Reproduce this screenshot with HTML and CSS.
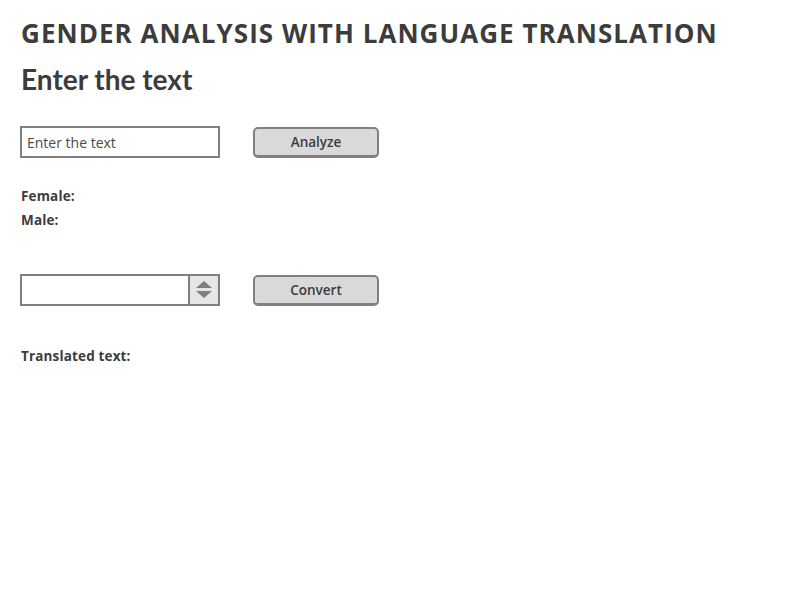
FILE: index.html
```html
<!DOCTYPE html>
<html>
<head>
<meta charset="utf-8">
<link rel="stylesheet" href="styles.css">
</head>
<body>
<main class="page">
  <h1 class="title">GENDER ANALYSIS WITH LANGUAGE TRANSLATION</h1>
  <h2 class="subtitle">Enter the text</h2>
  <div class="row row-input">
    <input class="text-input" type="text" placeholder="Enter the text">
    <button class="btn">Analyze</button>
  </div>
  <div class="results">
    <div class="label">Female:</div>
    <div class="label">Male:</div>
  </div>
  <div class="row row-select">
    <div class="select">
      <div class="select-value"></div>
      <div class="select-spin">
        <svg width="16" height="20" viewBox="0 0 16 20"><polygon points="8,1 16,8 0,8" fill="#7f7f7f"/><polygon points="0,11 16,11 8,18" fill="#7f7f7f"/></svg>
      </div>
    </div>
    <button class="btn">Convert</button>
  </div>
  <div class="label translated">Translated text:</div>
</main>
</body>
</html>
```
FILE: styles.css
```css
* { box-sizing: border-box; }
html, body { margin: 0; padding: 0; background: #fff; }
body { font-family: "Open Sans", sans-serif; color: #3c3c3c; }
.page { padding: 16px 0 0 21px; width: 792px; }
.title {
  margin: 0;
  font-family: "Open Sans", sans-serif;
  font-weight: 700;
  font-size: 26px;
  line-height: 35px;
  letter-spacing: 1.05px;
  color: #3c3c3c;
}
.subtitle {
  margin: 11px 0 0 0;
  font-family: "Lato", sans-serif;
  font-weight: 700;
  font-size: 28px;
  line-height: 34px;
  color: #3c3c3c;
}
.row { display: flex; align-items: flex-start; gap: 33px; margin-left: -1px; }
.row-input { margin-top: 30px; }
.text-input {
  width: 200px; height: 32px;
  border: 2px solid #808080;
  padding: 0 0 0 5px;
  font-family: "Open Sans", sans-serif;
  font-size: 14px;
  color: #444;
  outline: none;
  background: #fff;
}
.text-input::placeholder { color: #4a4a4a; opacity: 1; }
.btn {
  width: 126px; height: 31px;
  margin-top: 1px;
  border: 2px solid #808080;
  border-bottom-width: 3px;
  border-radius: 5px;
  background: #d9d9d9;
  font-family: "Open Sans", sans-serif;
  font-weight: 600;
  font-size: 13.5px;
  color: #3c3c3c;
  padding: 0;
}
.results { margin-top: 26px; }
.label {
  font-family: "Open Sans", sans-serif;
  font-weight: 700;
  font-size: 13.5px;
  letter-spacing: 0.15px;
  line-height: 24px;
  color: #3c3c3c;
}
.row-select { margin-top: 42px; }
.select {
  width: 200px; height: 32px;
  border: 2px solid #808080;
  display: flex;
  background: #fff;
}
.select-value { flex: 1; }
.select-spin {
  width: 30px;
  border-left: 2px solid #808080;
  background: #e6e6e6;
  display: flex; align-items: center; justify-content: center;
}
.translated { margin-top: 38px; }
```
